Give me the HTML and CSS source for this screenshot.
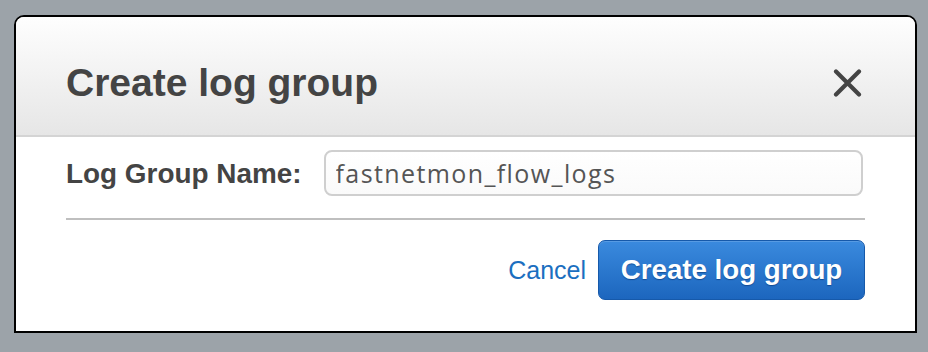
FILE: index.html
```html
<!DOCTYPE html>
<html>

<head>
  <meta charset="UTF-8">
  <title>Create log group</title>
  <link rel="stylesheet" href="styles.css">
</head>

<body>

  <div class="dialog">
    <div class="dialogHeader">
      <h2>Create log group</h2>
      <span class="close">
        <svg width="29" height="28" viewBox="0 0 29 28">
          <path d="M3 2.5 L26 25.5 M26 2.5 L3 25.5" stroke="#444" stroke-width="4.2" stroke-linecap="round" fill="none"/>
        </svg>
      </span>
    </div>

    <div class="dialogBody">
      <div class="fieldRow">
        <label for="groupName">Log Group Name:</label>
        <input id="groupName" type="text" value="fastnetmon_flow_logs">
      </div>
      <hr>
      <div class="actions">
        <a href="#" class="cancel">Cancel</a>
        <button class="primary">Create log group</button>
      </div>
    </div>
  </div>

</body>

</html>
```

FILE: styles.css
```css
body {
  background-color: #9ca3a9;
  margin: 0;
  padding: 15px 0 0 14px;
  font-family: 'Liberation Sans', Arial, sans-serif;
}

.dialog {
  width: 899px;
  height: 314px;
  background-color: #fff;
  border: 2px solid #000;
  border-radius: 10px 10px 0 0;
  overflow: hidden;
}

.dialogHeader {
  height: 104px;
  padding: 14px 53px 0 50px;
  display: flex;
  align-items: center;
  justify-content: space-between;
  background: linear-gradient(#fefefe, #e6e6e6);
  border-bottom: 2px solid #d4d4d4;
}

.dialogHeader h2 {
  margin: 0;
  font-size: 39px;
  font-weight: bold;
  color: #444;
}

.close {
  display: flex;
  margin-top: -1px;
}

.dialogBody {
  padding: 13px 50px 0 50px;
}

.fieldRow {
  display: flex;
  align-items: center;
  gap: 22px;
}

.fieldRow label {
  font-size: 27.9px;
  font-weight: bold;
  color: #444;
  margin-top: 1px;
}

.fieldRow input {
  width: 539px;
  height: 46px;
  box-sizing: border-box;
  border: 2px solid #cfcfcf;
  border-radius: 8px;
  padding: 0 10px;
  font-family: 'Open Sans', 'DejaVu Sans', sans-serif;
  font-size: 25px;
  letter-spacing: 1.4px;
  color: #555;
  background: linear-gradient(#fff, #fafafa);
  outline: none;
}

hr {
  margin: 22px 0 0 0;
  border: 0;
  border-top: 2px solid #bfbfbf;
}

.actions {
  display: flex;
  justify-content: flex-end;
  align-items: center;
  gap: 12px;
  margin-top: 20px;
}

.cancel {
  color: #1b6fc0;
  text-decoration: none;
  font-size: 25px;
}

.primary {
  width: 267px;
  height: 60px;
  border: 1px solid #1659aa;
  border-radius: 7px;
  background: linear-gradient(#3a8ade, #1c66be);
  color: #fff;
  font-family: 'Liberation Sans', Arial, sans-serif;
  font-size: 27.7px;
  font-weight: bold;
  text-shadow: 0 1px 1px rgba(0, 40, 100, 0.5);
  box-shadow: inset 0 1px 0 rgba(255, 255, 255, 0.15);
}
```
